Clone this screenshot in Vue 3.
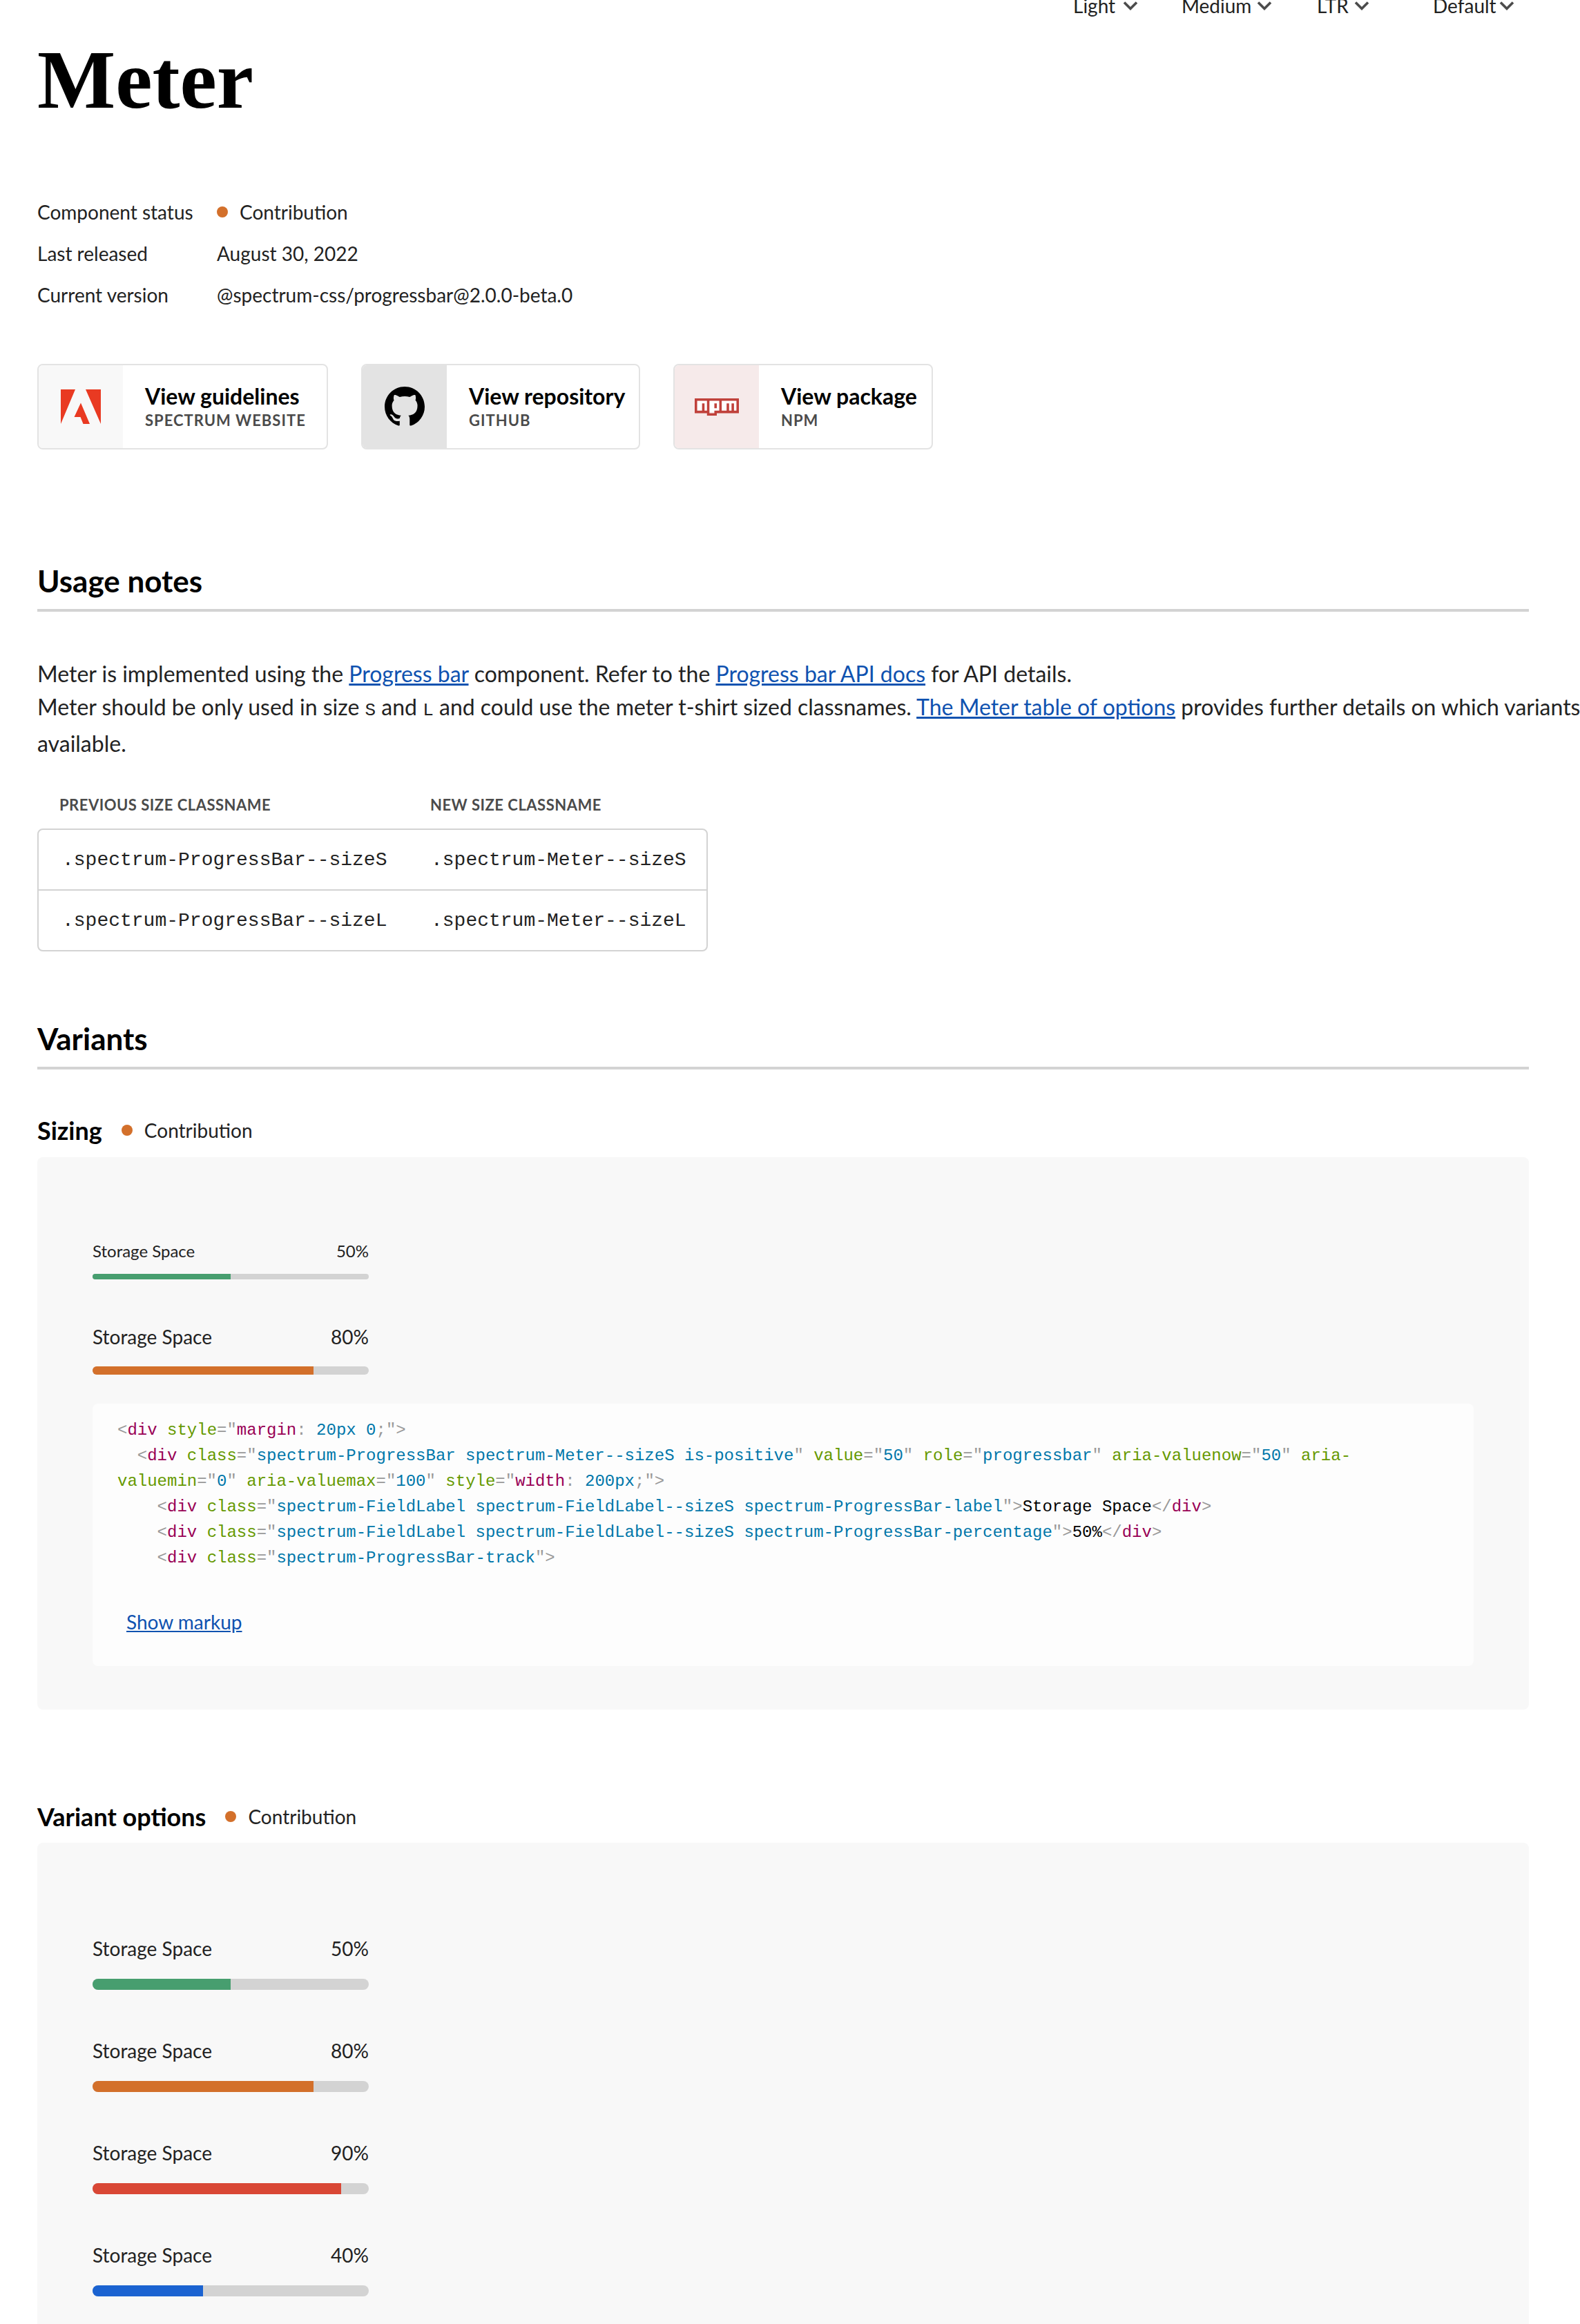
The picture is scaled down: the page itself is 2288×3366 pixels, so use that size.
<script setup>
const pickers = ['Light', 'Medium', 'LTR', 'Default']

const statusRows = [
  { label: 'Component status', value: 'Contribution', dot: true },
  { label: 'Last released', value: 'August 30, 2022' },
  { label: 'Current version', value: '@spectrum-css/progressbar@2.0.0-beta.0' },
]

const sizeMeters = [
  { value: 50, color: '#479e6f', size: 's' },
  { value: 80, color: '#d3702b', size: 'l' },
]

const optionMeters = [
  { value: 50, color: '#479e6f' },
  { value: 80, color: '#d3702b' },
  { value: 90, color: '#d94735' },
  { value: 40, color: '#1b63d1' },
]

const p = t => ['p', t]
const tag = t => ['t', t]
const at = t => ['a', t]
const v = t => ['v', t]
const x = t => ['x', t]

function open(indent, attrs) {
  return [p(indent + '<'), tag('div'), ...attrs]
}
function attr(name, value, lead = ' ') {
  return [x(lead), at(name), p('="'), v(value), p('"')]
}

const codeLines = [
  [p('<'), tag('div'), x(' '), at('style'), p('="'), tag('margin'), p(':'), v(' 20px 0'), p(';"'), p('>')],
  [...open('  ', attr('class', 'spectrum-ProgressBar spectrum-Meter--sizeS is-positive')), ...attr('value', '50'), ...attr('role', 'progressbar'), ...attr('aria-valuenow', '50'), x(' '), at('aria-')],
  [at('valuemin'), p('="'), v('0'), p('"'), ...attr('aria-valuemax', '100'), x(' '), at('style'), p('="'), tag('width'), p(':'), v(' 200px'), p(';"'), p('>')],
  [...open('    ', attr('class', 'spectrum-FieldLabel spectrum-FieldLabel--sizeS spectrum-ProgressBar-label')), p('>'), x('Storage Space'), p('</'), tag('div'), p('>')],
  [...open('    ', attr('class', 'spectrum-FieldLabel spectrum-FieldLabel--sizeS spectrum-ProgressBar-percentage')), p('>'), x('50%'), p('</'), tag('div'), p('>')],
  [...open('    ', attr('class', 'spectrum-ProgressBar-track')), p('>')],
]
</script>

<template>
  <div class="page">
    <div class="pickers">
      <div v-for="name in pickers" :key="name" class="picker">
        <span>{{ name }}</span>
        <svg width="22" height="14" viewBox="0 0 22 14"><path d="M2 2.5l9 9 9-9" fill="none" stroke="#4b4b4b" stroke-width="3.6" /></svg>
      </div>
    </div>

    <h1 class="title">Meter</h1>

    <dl class="status">
      <div v-for="row in statusRows" :key="row.label" class="status-row">
        <dt>{{ row.label }}</dt>
        <dd><i v-if="row.dot" class="dot" />{{ row.value }}</dd>
      </div>
    </dl>

    <div class="cards">
      <a class="card card-adobe">
        <div class="card-icon">
          <svg width="58" height="50" viewBox="0 0 58 50">
            <path fill="#e93a22" d="M0 0h21L0 50zM36 0h22v50zM29 19.500l13 30.500h-9.500l-4-10h-9z" />
          </svg>
        </div>
        <div class="card-text">
          <strong>View guidelines</strong>
          <small>Spectrum website</small>
        </div>
      </a>
      <a class="card card-github">
        <div class="card-icon">
          <svg width="58" height="58" viewBox="0 0 16 16">
            <path fill="#000" d="M8 0C3.580 0 0 3.580 0 8c0 3.540 2.290 6.530 5.470 7.590.4.070.55-.17.55-.38 0-.19-.01-.82-.01-1.490-2.010.37-2.530-.49-2.690-.94-.09-.23-.48-.94-.82-1.130-.28-.15-.68-.52-.01-.53.63-.01 1.080.58 1.230.82.72 1.210 1.870.87 2.330.66.07-.52.28-.87.51-1.070-1.780-.2-3.640-.89-3.640-3.950 0-.87.31-1.590.82-2.150-.08-.2-.36-1.020.08-2.120 0 0 .67-.21 2.200.82.64-.18 1.320-.27 2-.27.68 0 1.360.09 2 .27 1.530-1.040 2.200-.82 2.200-.82.44 1.100.16 1.920.08 2.120.51.56.82 1.270.82 2.150 0 3.070-1.870 3.750-3.650 3.950.29.25.54.73.54 1.480 0 1.070-.01 1.930-.01 2.200 0 .21.15.46.55.38A8.013 8.013 0 0016 8c0-4.420-3.580-8-8-8z" />
          </svg>
        </div>
        <div class="card-text">
          <strong>View repository</strong>
          <small>GitHub</small>
        </div>
      </a>
      <a class="card card-npm">
        <div class="card-icon">
          <svg width="64" height="25" viewBox="0 0 18 7">
            <rect x="0.500" y="0.500" width="17" height="5" fill="#fff" />
            <path fill="#c0413b" fill-rule="evenodd" d="M0 0h18v6H9v1H5V6H0zM1 1v4h2V2h1v3h1V1zM6 1v5h2V5h2V1zM8 2h1v2H8zM11 1v4h2V2h1v3h1V2h1v3h1V1z" />
          </svg>
        </div>
        <div class="card-text">
          <strong>View package</strong>
          <small>npm</small>
        </div>
      </a>
    </div>

    <h2 class="section-head usage-head">Usage notes</h2>
    <p class="notes">
      Meter is implemented using the <a>Progress bar</a> component. Refer to the <a>Progress bar API docs</a> for API details.<br>
      Meter should be only used in size <code>S</code> and <code>L</code> and could use the meter t-shirt sized classnames. <a>The Meter table of options</a> provides further details on which variants are<br>
      available.
    </p>

    <div class="table-head">
      <span>Previous size classname</span>
      <span>New size classname</span>
    </div>
    <div class="table">
      <div class="table-row">
        <code>.spectrum-ProgressBar--sizeS</code>
        <code>.spectrum-Meter--sizeS</code>
      </div>
      <div class="table-row">
        <code>.spectrum-ProgressBar--sizeL</code>
        <code>.spectrum-Meter--sizeL</code>
      </div>
    </div>

    <h2 class="section-head variants-head">Variants</h2>

    <div class="sub-head sizing-head">
      <h3>Sizing</h3>
      <i class="dot" />
      <span>Contribution</span>
    </div>
    <section class="panel sizing-panel">
      <div v-for="m in sizeMeters" :key="m.value" class="meter" :class="'meter-' + m.size">
        <div class="meter-label"><span>Storage Space</span><span>{{ m.value }}%</span></div>
        <div class="track"><div class="fill" :style="{ width: m.value + '%', background: m.color }" /></div>
      </div>
      <div class="code-box">
        <pre><template v-for="(line, i) in codeLines" :key="i"><div class="code-line"><span v-for="(tok, j) in line" :key="j" :class="'tok-' + tok[0]">{{ tok[1] }}</span></div></template></pre>
        <a class="show-markup">Show markup</a>
      </div>
    </section>

    <div class="sub-head options-head">
      <h3>Variant options</h3>
      <i class="dot" />
      <span>Contribution</span>
    </div>
    <section class="panel options-panel">
      <div v-for="m in optionMeters" :key="m.value" class="meter meter-xl">
        <div class="meter-label"><span>Storage Space</span><span>{{ m.value }}%</span></div>
        <div class="track"><div class="fill" :style="{ width: m.value + '%', background: m.color }" /></div>
      </div>
    </section>
  </div>
</template>

<style scoped>
.page {
  width: 2160px;
  height: 3366px;
  padding: 0 74px 0 54px;
  overflow: hidden;
  color: #222;
  font-family: Lato, "Open Sans", sans-serif;
  font-size: 28px;
}
.pickers {
  display: flex;
  margin: -10px 0 0 1500px;
  height: 36px;
  line-height: 36px;
}
.picker {
  display: flex;
  align-items: center;
  justify-content: space-between;
}
.picker:nth-child(1) { width: 94px; }
.picker:nth-child(2) { width: 131px; margin-left: 63px; }
.picker:nth-child(3) { width: 76px; margin-left: 65px; }
.picker:nth-child(4) { width: 118px; margin-left: 92px; }
.title {
  margin: 30px 0 0;
  color: #000;
  font-family: "Liberation Serif", serif;
  font-size: 120px;
  line-height: 120px;
  font-weight: 700;
}
.status {
  margin: 101px 0 0;
}
.status-row {
  display: flex;
  height: 60px;
  line-height: 60px;
}
.status dt {
  width: 260px;
}
.status dd {
  margin: 0;
  display: flex;
  align-items: center;
}
.dot {
  display: inline-block;
  width: 16px;
  height: 16px;
  border-radius: 50%;
  background: #d3702b;
  margin-right: 17px;
}
.cards {
  display: flex;
  gap: 48px;
  margin-top: 70px;
}
.card {
  display: flex;
  height: 124px;
  box-sizing: border-box;
  border: 2px solid #e3e3e3;
  border-radius: 8px;
  overflow: hidden;
}
.card-adobe { width: 421px; }
.card-github { width: 404px; }
.card-npm { width: 376px; }
.card-icon {
  display: flex;
  align-items: center;
  justify-content: center;
  width: 122px;
  flex: none;
}
.card-adobe .card-icon { background: #f8f8f8; }
.card-github .card-icon { background: #e3e3e3; }
.card-npm .card-icon { background: #f6eaea; }
.card-text {
  display: flex;
  flex-direction: column;
  justify-content: center;
  padding-left: 32px;
}
.card-text strong {
  color: #000;
  font-size: 32px;
  line-height: 40px;
}
.card-text small {
  color: #4b4b4b;
  font-size: 22px;
  font-weight: 700;
  line-height: 30px;
  letter-spacing: 1px;
  text-transform: uppercase;
}
.section-head {
  margin: 0;
  padding-bottom: 13px;
  height: 56px;
  line-height: 56px;
  color: #000;
  font-size: 44px;
  font-weight: 700;
  border-bottom: 4px solid #d3d3d3;
  box-sizing: content-box;
}
.usage-head { margin-top: 162px; }
.variants-head { margin-top: 98px; }
.notes {
  margin: 66px 0 0;
  font-size: 32px;
  line-height: 48px;
  white-space: nowrap;
}
.notes a, .show-markup {
  color: #0f52b0;
  text-decoration: underline;
}
.notes code {
  font-family: "Liberation Mono", monospace;
  font-size: 26px;
}
.table-head {
  display: flex;
  margin-top: 50px;
  padding-left: 32px;
  color: #4b4b4b;
  font-size: 22px;
  font-weight: 700;
  line-height: 30px;
  letter-spacing: 0.5px;
  text-transform: uppercase;
}
.table-head span:first-child { width: 537px; }
.table {
  width: 971px;
  margin-top: 19px;
  box-sizing: border-box;
  border: 2px solid #d3d3d3;
  border-radius: 8px;
}
.table-row {
  display: flex;
  height: 86px;
  align-items: center;
  padding-left: 34px;
  font-family: "Liberation Mono", monospace;
  font-size: 28px;
}
.table-row + .table-row {
  border-top: 2px solid #d3d3d3;
}
.table-row code:first-child { width: 534px; }
.table-row code { font-family: inherit; }
.sub-head {
  display: flex;
  align-items: center;
  height: 48px;
}
.sub-head h3 {
  margin: 0 28px 0 0;
  color: #000;
  font-size: 36px;
  font-weight: 700;
}
.sub-head .dot { flex: none; }
.sizing-head { margin-top: 64px; }
.options-head { margin-top: 131px; }
.panel {
  margin-top: 15px;
  padding: 0 80px;
  background: #f8f8f8;
  border-radius: 8px;
}
.sizing-panel {
  padding-top: 118px;
  padding-bottom: 63px;
}
.options-panel {
  margin-top: 14px;
  padding-top: 133px;
  height: 900px;
}
.meter {
  width: 400px;
}
.meter-label {
  display: flex;
  justify-content: space-between;
}
.track {
  background: #d3d3d3;
  border-radius: 8px;
  overflow: hidden;
}
.fill {
  height: 100%;
}
.meter-s .meter-label { font-size: 24px; line-height: 36px; }
.meter-s .track { height: 8px; margin-top: 15px; }
.meter-l { margin-top: 63px; }
.meter-l .meter-label { line-height: 40px; }
.meter-l .track { height: 12px; margin-top: 23px; }
.meter-xl .meter-label { line-height: 40px; }
.meter-xl .track { height: 16px; margin-top: 24px; }
.meter-xl + .meter-xl { margin-top: 68px; }
.code-box {
  margin-top: 42px;
  padding: 20px 36px 40px;
  background: #fdfdfd;
  border-radius: 8px;
}
.code-box pre {
  margin: 0;
  font-family: "Liberation Mono", monospace;
  font-size: 24px;
  line-height: 37px;
}
.code-line {
  height: 37px;
}
.tok-p { color: #999; }
.tok-t { color: #905; }
.tok-a { color: #690; }
.tok-v { color: #07a; }
.tok-x { color: #000; }
.show-markup {
  display: block;
  margin: 50px 0 0 13px;
  line-height: 48px;
}
</style>

<style>
html, body {
  margin: 0;
  background: #fff;
}
</style>
